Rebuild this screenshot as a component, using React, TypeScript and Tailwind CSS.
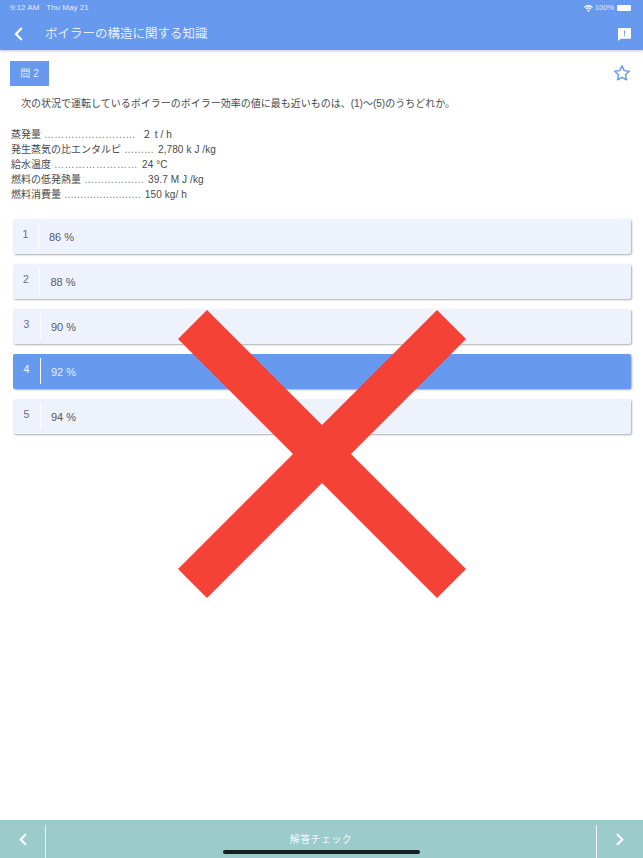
import React from "react";

const font = { fontFamily: '"Liberation Sans", "Noto Sans CJK JP", sans-serif' };

const options = [
  { n: "1", t: "86 %", numW: "w-[26px]", pad: "pl-[10px]" },
  { n: "2", t: "88 %", numW: "w-[27px]", pad: "pl-[10.5px]" },
  { n: "3", t: "90 %", numW: "w-[28px]", pad: "pl-[10px]" },
  { n: "4", t: "92 %", numW: "w-[28px]", pad: "pl-[10px]", active: true },
  { n: "5", t: "94 %", numW: "w-[28px]", pad: "pl-[10px]" },
];

const lines = [
  { label: "蒸発量", dots: "………………………………", value: "２ t / h", cls: "tracking-[0.2px]", gap: "ml-[6px]" },
  { label: "発生蒸気の比エンタルピ", dots: "…………", value: "2,780 k J /kg", cls: "", gap: "ml-[4px]" },
  { label: "給水温度", dots: "……………………………", value: "24 °C", cls: "tracking-[0.5px]", gap: "ml-[4px]" },
  { label: "燃料の低発熱量", dots: "…………………", value: "39.7 M J /kg", cls: "", gap: "ml-[4px]" },
  { label: "燃料消費量", dots: "……………………………", value: "150 kg/ h", cls: "tracking-[-0.4px]", gap: "ml-[4px]" },
].map((l) => ({ ...l, dots: l.dots }));

const dotCounts: Record<string, number> = { 蒸発量: 9, 発生蒸気の比エンタルピ: 3, 給水温度: 8, 燃料の低発熱量: 6, 燃料消費量: 8 };

function Chevron({ dir, className }: { dir: "l" | "r"; className: string }) {
  return (
    <svg viewBox="0 0 10 16" className={className} fill="none" stroke="#ffffff" strokeWidth="2.6" strokeLinecap="round" strokeLinejoin="round">
      <path d={dir === "l" ? "M8 2 2 8l6 6" : "M2 2l6 6-6 6"} />
    </svg>
  );
}

export default function App() {
  return (
    <div className="relative flex flex-col h-[858px] w-[643px] overflow-hidden bg-white text-[#4a4a4a]" style={font}>
      <header className="relative z-10 flex h-[50px] flex-col bg-[#6799ee] text-white shadow-[0_1px_3px_rgba(70,90,140,0.35)]">
        <div className="flex h-[15px] items-center justify-between pl-[10px] pr-[12px] pt-[1px] text-[8px] text-[#e4edfc]">
          <div className="flex gap-[7px]">
            <span>9:12 AM</span>
            <span>Thu May 21</span>
          </div>
          <div className="flex items-center gap-[2px]">
            <svg viewBox="0 0 12 9" className="h-[7px] w-[9px]" fill="#ffffff">
              <path d="M6 9 4.2 6.9a2.6 2.6 0 0 1 3.6 0zM3.3 5.9 2.2 4.7a5.4 5.4 0 0 1 7.6 0L8.7 5.9a3.9 3.9 0 0 0-5.4 0zM1.3 3.7 0 2.4a8.4 8.4 0 0 1 12 0l-1.3 1.3a6.6 6.6 0 0 0-9.4 0z" />
            </svg>
            <span className="text-[7.5px]">100%</span>
            <span className="ml-[1px] h-[6px] w-[14px] rounded-[1px] bg-white" />
          </div>
        </div>
        <div className="flex flex-1 items-center pt-[3px] pl-[14px] pr-[12px]">
          <Chevron dir="l" className="h-[14px] w-[9px]" />
          <span className="ml-[22px] flex-1 text-[12.5px] text-[#e6eefc]">ボイラーの構造に関する知識</span>
          <svg viewBox="0 0 14 14" className="h-[13px] w-[13px]">
            <path fill="#ffffff" fillRule="evenodd" d="M1 0h12a1 1 0 0 1 1 1v9.5a1 1 0 0 1-1 1H3L0 14V1a1 1 0 0 1 1-1zM6.4 3h1.2v3.6H6.4zM6.4 7.6h1.2v1.2H6.4z" />
          </svg>
        </div>
      </header>

      <main className="flex flex-1 flex-col pt-[11px]">
        <div className="flex items-start justify-between pl-[10px] pr-[12px]">
          <div className="flex h-[25px] w-[39px] items-center justify-center gap-[3px] bg-[#6799ee] text-[10px] text-[#e6eefc]">
            <span>問</span>
            <span>2</span>
          </div>
          <svg viewBox="0 0 24 24" className="mt-[3px] h-[18px] w-[18px]" fill="none" stroke="#6799ee" strokeWidth="1.9" strokeLinejoin="round">
            <path d="M12 2.5l2.9 6.3 6.8.8-5 4.7 1.3 6.8-6-3.4-6 3.4 1.3-6.8-5-4.7 6.8-.8z" />
          </svg>
        </div>

        <p className="mt-[10px] pl-[21px] text-[10px] leading-[15px]">
          次の状況で運転しているボイラーのボイラー効率の値に最も近いものは、(1)〜(5)のうちどれか。
        </p>

        <div className="mt-[16px] pl-[11px] text-[10px] leading-[15px]">
          {lines.map((l) => (
            <div key={l.label} className="flex whitespace-nowrap">
              <span>{l.label}</span>
              <span className={"ml-[3px] text-[#777] " + l.cls}>{"…".repeat(dotCounts[l.label])}</span>
              <span className={l.gap + " tracking-[0.1px]"}>{l.value}</span>
            </div>
          ))}
        </div>

        <div className="mt-[17px] flex flex-col gap-[10px] pl-[13px] pr-[12px]">
          {options.map((o) => (
            <div
              key={o.n}
              className={
                "flex h-[35px] items-center rounded-[2px] shadow-[1px_1px_2px_rgba(0,0,0,0.32)] " +
                (o.active ? "bg-[#6799ee] text-[#e6eefc]" : "bg-[#eef2fc] text-[#555a66]")
              }
            >
              <div className={"flex h-[26px] shrink-0 -translate-y-[1px] items-center justify-center border-r text-[10.5px] font-medium " + o.numW + " " + (o.active ? "border-white text-white" : "border-white text-[#6b707c]")}>
                <span className="-translate-y-[1px]">{o.n}</span>
              </div>
              <span className={"translate-y-[1px] text-[11px] " + o.pad}>{o.t}</span>
            </div>
          ))}
        </div>
      </main>

      <footer className="flex h-[38px] items-stretch bg-[#9ccbcb] pt-[5px] text-white">
        <div className="flex w-[46px] items-center justify-center border-r border-[#eef6f6] pb-[5px]">
          <Chevron dir="l" className="h-[13px] w-[8px]" />
        </div>
        <div className="flex flex-1 items-center justify-center pb-[5px] text-[10px] tracking-[0.4px] text-[#f2f9f9]">解答チェック</div>
        <div className="flex w-[47px] items-center justify-center border-l border-[#eef6f6] pb-[5px]">
          <Chevron dir="r" className="h-[13px] w-[8px]" />
        </div>
      </footer>

      {/* home indicator */}
      <div className="absolute bottom-[4px] left-[223px] h-[4px] w-[197px] rounded-full bg-[#14201f]" />

      {/* wrong-answer mark */}
      <svg viewBox="0 0 288 288" className="absolute left-[178px] top-[310px] h-[288px] w-[288px]">
        <path fill="#f44336" d="M29 0 144 115 259 0 288 29 173 144 288 259 259 288 144 173 29 288 0 259 115 144 0 29z" />
      </svg>
    </div>
  );
}
